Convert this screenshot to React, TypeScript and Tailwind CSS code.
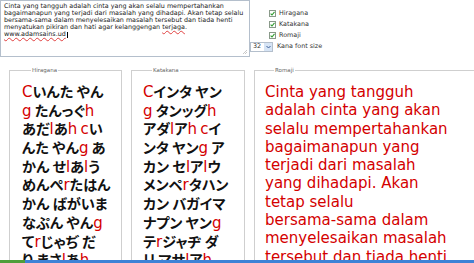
import React from "react";

const hira = [
  "Cいんた やん",
  "g たんっぐh",
  "あだlあh cい",
  "んた やんg あ",
  "かん せlあlう",
  "めんぺrたはん",
  "かん ばがいま",
  "なぷん やんg",
  "てrじゃぢ だ",
  "り まさlあh",
];

const kata = [
  "Cインタ ヤン",
  "g タンッグh",
  "アダlアh cイ",
  "ンタ ヤンg ア",
  "カン セlアlウ",
  "メンペrタハン",
  "カン バガイマ",
  "ナプン ヤンg",
  "テrジャヂ ダ",
  "リ マサlアh",
];

const romaji = [
  "Cinta yang tangguh",
  "adalah cinta yang akan",
  "selalu mempertahankan",
  "bagaimanapun yang",
  "terjadi dari masalah",
  "yang dihadapi. Akan",
  "tetap selalu",
  "bersama-sama dalam",
  "menyelesaikan masalah",
  "tersebut dan tiada henti",
];

function KanaLine({ s }: { s: string }) {
  return (
    <div className="whitespace-pre h-[18.7px] leading-[18.7px]">
      {s.split("").map((ch, i) =>
        /[A-Za-z]/.test(ch) ? (
          <span
            key={i}
            className="text-[#d40000] text-[15px] font-['DejaVu_Sans',sans-serif] font-normal"
          >
            {ch}
          </span>
        ) : (
          <span key={i}>{ch}</span>
        )
      )}
    </div>
  );
}

function Check({ label }: { label: string }) {
  return (
    <div className="flex items-center h-[11px] pl-[19px] gap-[3px]">
      <div className="w-[7px] h-[7px] border border-[#8a9a8a] bg-white flex items-center justify-center">
        <svg width="5" height="5" viewBox="0 0 5 5">
          <path d="M0.6 2.6 L2 4 L4.5 0.9" stroke="#2e9b2e" strokeWidth="1.1" fill="none" />
        </svg>
      </div>
      <span>{label}</span>
    </div>
  );
}

function Box({
  title,
  width,
  children,
  pl,
}: {
  title: string;
  width: string;
  children: React.ReactNode;
  pl: string;
}) {
  return (
    <fieldset className={`${width} ${pl} shrink-0 border border-[#cfcfcf] pt-[7px] h-[220px]`}>
      <legend className="ml-[9px] px-[1px] text-[5.5px] leading-[7px] text-[#666] font-['DejaVu_Sans',sans-serif]">
        {title}
      </legend>
      {children}
    </fieldset>
  );
}

export default function App() {
  return (
    <div className="relative w-[474px] h-[263px] overflow-hidden bg-white">
      <div className="flex h-[57px]">
        <div className="relative w-[250px] h-[57px] shrink-0 border border-[#b4bfcc] px-[3px] pt-[2px] text-[6.4px] leading-[7px] text-[#222] font-['DejaVu_Sans',sans-serif] whitespace-nowrap">
          <div>Cinta yang tangguh adalah cinta yang akan selalu mempertahankan</div>
          <div>bagaimanapun yang terjadi dari masalah yang dihadapi. Akan tetap selalu</div>
          <div>bersama-sama dalam menyelesaikan masalah tersebut dan tiada henti</div>
          <div>
            menyatukan pikiran dan hati agar kelanggengan{" "}
            <span className="underline decoration-wavy decoration-[#e04040] decoration-[0.6px]">terjaga</span>.
          </div>
          <div className="flex items-center">
            <span className="underline decoration-wavy decoration-[#e04040] decoration-[0.6px]">www.adamsains.ud</span>
            <span className="inline-block w-[0.6px] h-[6px] bg-black ml-[1px]" />
          </div>
          <svg className="absolute right-[1px] bottom-[1px]" width="6" height="6" viewBox="0 0 6 6">
            <path d="M5 1 L1 5 M5 3 L3 5" stroke="#b0b0b0" strokeWidth="0.7" />
          </svg>
        </div>
        <div className="flex flex-col pt-[8px] text-[6.4px] text-[#333] font-['DejaVu_Sans',sans-serif]">
          <Check label="Hiragana" />
          <Check label="Katakana" />
          <Check label="Romaji" />
          <div className="flex items-center h-[11px] gap-[4px]">
            <div className="flex items-center h-[10px] w-[23px] border border-[#b4bfcc] bg-white">
              <span className="pl-[2px] flex-1">32</span>
              <div className="w-[8px] h-full bg-[#d6e4f5] flex items-center justify-center">
                <svg width="5" height="4" viewBox="0 0 5 4">
                  <path d="M0.5 1 L2.5 3 L4.5 1" stroke="#3b5f99" strokeWidth="1" fill="none" />
                </svg>
              </div>
            </div>
            <span>Kana font size</span>
          </div>
        </div>
      </div>

      <div className="flex gap-[9px] pl-[9px] mt-[10px]">
        <Box title="Hiragana" width="w-[113px]" pl="pl-[12px]">
          <div className="mt-[1px] text-[14.2px] font-bold text-[#111] font-['Noto_Sans_CJK_JP',sans-serif] [font-feature-settings:'palt']">
            {hira.map((l, i) => (
              <KanaLine key={i} s={l} />
            ))}
          </div>
        </Box>
        <Box title="Katakana" width="w-[114px]" pl="pl-[11px]">
          <div className="mt-[1px] text-[14.2px] font-bold text-[#111] font-['Noto_Sans_CJK_JP',sans-serif] [font-feature-settings:'palt']">
            {kata.map((l, i) => (
              <KanaLine key={i} s={l} />
            ))}
          </div>
        </Box>
        <Box title="Romaji" width="w-[240px]" pl="pl-[10px]">
          <div className="mt-[2px] text-[15px] leading-[18.3px] text-[#d40000] font-['DejaVu_Sans',sans-serif] whitespace-nowrap">
            {romaji.map((l, i) => (
              <div key={i}>{l}</div>
            ))}
          </div>
        </Box>
      </div>

      <div className="absolute left-0 bottom-0 w-full h-[3px] flex">
        <div className="w-[25px] bg-[#4f9e3a]" />
        <div className="flex-1 bg-[#3d82d6]" />
      </div>
    </div>
  );
}
